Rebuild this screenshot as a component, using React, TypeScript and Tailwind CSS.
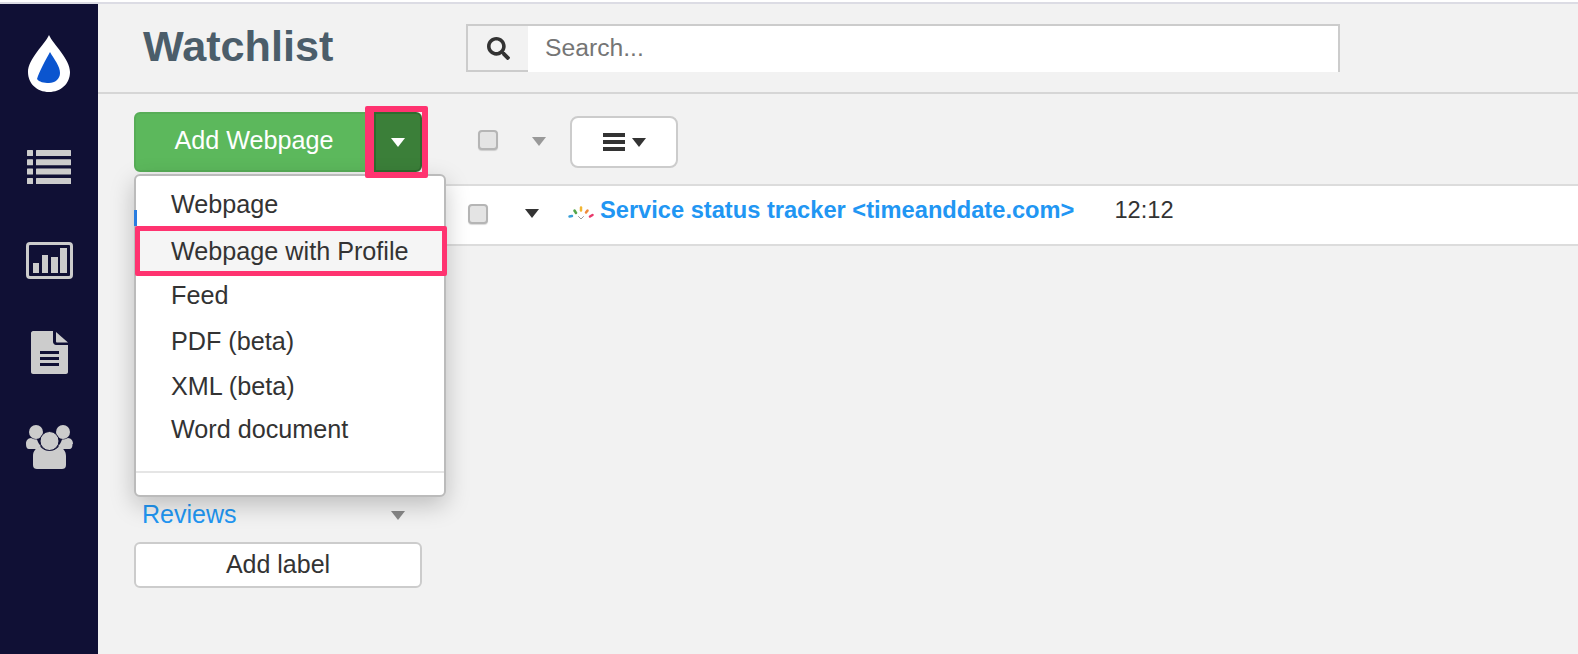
import { FaSearch } from 'react-icons/fa';

const FONT = "font-['Liberation_Sans',Arial,sans-serif]";

function Caret({ className }: { className: string }) {
  return (
    <svg viewBox="0 0 14 9" className={`h-[9px] w-[14px] ${className}`} aria-hidden="true">
      <path d="M0 0h14L7 9z" fill="currentColor" />
    </svg>
  );
}

function Checkbox() {
  return (
    <span className="block h-5 w-5 rounded-[4px] border-2 border-[#b5b5b5] bg-[#e4e4e4] shadow-[0_1px_1px_rgba(0,0,0,0.15)]" />
  );
}

function Logo() {
  return (
    <svg viewBox="0 0 42 57" className="h-[57px] w-[42px]" aria-hidden="true">
      <path d="M21 0C25 9 42 24 42 37C42 48.5 33 57 21 57C9 57 0 48.5 0 37C0 24 17 9 21 0Z" fill="#ffffff" />
      <path d="M22 17C26 24 32 31 32 38C32 44 27 48 21 48C16 48 11 47 9 44C11 37 18 24 22 17Z" fill="#0b55cf" />
    </svg>
  );
}

function ListIcon() {
  return (
    <svg viewBox="0 0 44 34" className="h-[34px] w-[44px]" fill="#cccccc" aria-hidden="true">
      <rect x="0" y="0" width="6" height="6" rx="0.5" />
      <rect x="9" y="0" width="35" height="6" rx="0.5" />
      <rect x="0" y="9.3" width="6" height="6" rx="0.5" />
      <rect x="9" y="9.3" width="35" height="6" rx="0.5" />
      <rect x="0" y="18.6" width="6" height="6" rx="0.5" />
      <rect x="9" y="18.6" width="35" height="6" rx="0.5" />
      <rect x="0" y="28" width="6" height="6" rx="0.5" />
      <rect x="9" y="28" width="35" height="6" rx="0.5" />
    </svg>
  );
}

function ChartIcon() {
  return (
    <svg viewBox="0 0 47 37" className="h-[37px] w-[47px]" aria-hidden="true">
      <rect x="1.5" y="1.5" width="44" height="34" rx="2.5" fill="none" stroke="#cccccc" strokeWidth="3" />
      <g fill="#cccccc">
        <rect x="7" y="21" width="6" height="10" />
        <rect x="16" y="13" width="6" height="18" />
        <rect x="25" y="15" width="7" height="16" />
        <rect x="34" y="6" width="7" height="25" />
      </g>
    </svg>
  );
}

function FileIcon() {
  return (
    <svg viewBox="0 0 37 43" className="h-[43px] w-[37px]" aria-hidden="true">
      <path d="M2 0H22V11C22 12.5 23.5 14 25 14H37V41C37 42 36 43 35 43H2C1 43 0 42 0 41V2C0 1 1 0 2 0Z" fill="#cccccc" />
      <path d="M25 1L37 11.500H26C25.500 11.500 25 11 25 10.500Z" fill="#cccccc" />
      <g fill="#101035">
        <rect x="9" y="20" width="19" height="3" />
        <rect x="9" y="26" width="19" height="3" />
        <rect x="9" y="32" width="19" height="3" />
      </g>
    </svg>
  );
}

function UsersIcon() {
  return (
    <svg viewBox="0 0 47 44" className="h-[44px] w-[47px]" aria-hidden="true">
      <g fill="#cccccc">
        <circle cx="10" cy="7" r="7" />
        <circle cx="37" cy="7" r="7" />
        <path d="M0 19c0-4 2-5.500 5-6 2 1 4 1.500 6 1.500 1 3 2 5 4 6.500-1.500 1-2.500 2-3.500 3H3c-2 0-3-1.500-3-5z" />
        <path d="M47 19c0-4-2-5.500-5-6-2 1-4 1.500-6 1.500-1 3-2 5-4 6.500 1.500 1 2.500 2 3.500 3h8c2 0 3-1.500 3-5z" />
      </g>
      <circle cx="23.500" cy="16" r="9.500" fill="#cccccc" stroke="#101035" strokeWidth="1" />
      <path d="M7 31c0-5 3-8 7-9.500 3 3 6 4.500 9.500 4.500s6.500-1.500 9.500-4.500c4 1.500 7 4.500 7 9.500v9c0 3-2 4-4 4H11c-2 0-4-1-4-4z" fill="#cccccc" />
    </svg>
  );
}

function Favicon() {
  return (
    <svg viewBox="0 0 26 14" className="h-[14px] w-[26px]" strokeWidth="2.5" strokeLinecap="round" aria-hidden="true">
      <path d="M1.500 10.500l2.500-0.500" stroke="#3aa0d8" />
      <path d="M6.500 4.500l1.500 2.500" stroke="#55a64a" />
      <path d="M13 1.500v3" stroke="#f2b632" />
      <path d="M19.500 4.500l-1.500 2" stroke="#ef8a3c" />
      <path d="M24.500 9l-2.500 1.500" stroke="#e8396b" />
      <path d="M10.500 10.500l2.500 2.500 2.500-2.500" stroke="#999999" strokeWidth="1" fill="none" />
    </svg>
  );
}

function MenuItem({ label, className }: { label: string; className: string }) {
  return <div className={`pl-[35px] text-[25.200px] leading-[30px] text-[#333333] ${className}`}>{label}</div>;
}

export default function App() {
  return (
    <div className={`${FONT} h-[654px] w-[1578px] overflow-hidden bg-white`}>
      <div className="mt-[2px] h-[2px] bg-[#dcdce4]" />
      <div className="flex h-[650px]">
        <nav className="flex w-[98px] shrink-0 flex-col items-center bg-[#101035]">
          <div className="mt-[31px]"><Logo /></div>
          <div className="mt-[58px]"><ListIcon /></div>
          <div className="mt-[58px]"><ChartIcon /></div>
          <div className="mt-[52px]"><FileIcon /></div>
          <div className="mt-[51px]"><UsersIcon /></div>
        </nav>

        <main className="relative flex min-w-0 flex-1 flex-col bg-[#f2f2f2]">
          <header className="flex h-[90px] items-start border-b-2 border-[#d6d6d6]">
            <h1 className="ml-[45px] mt-[14px] w-[323px] text-[43.200px] font-bold leading-[56px] text-[#4b5d6a]">Watchlist</h1>
            <div className="mt-[20px] flex h-[48px] w-[874px] border-t-2 border-r-2 border-[#cccccc]">
              <div className="flex w-[62px] items-center justify-center border-b-2 border-l-2 border-[#cccccc]">
                <FaSearch className="h-[23px] w-[23px]" color="#333333" />
              </div>
              <div className="flex-1 bg-white pl-[17px] text-[24.700px] leading-[44px] text-[#757575]">Search...</div>
            </div>
          </header>

          <div className="flex flex-1">
            <aside className="ml-[36px] w-[288px] shrink-0 pt-[18px]">
              <div className="flex h-[60px]">
                <button type="button" className="flex w-[240px] items-center justify-center rounded-l-[6px] border-2 border-[#57ad57] bg-[#5cb85c] pb-[3px] text-[25.200px] text-white">
                  Add Webpage
                </button>
                <button type="button" className="flex w-[48px] items-center justify-center rounded-r-[6px] border-2 border-[#2f6b2e] bg-[#3b7f39] text-white">
                  <Caret className="text-white" />
                </button>
              </div>
              <div className="h-[328px] pt-[38px]">
                <div className="relative z-10 h-[16px] w-[3px] bg-[#2a7de0]" />
              </div>
              <div className="flex h-[30px] items-center justify-between pl-[8px] pr-[17px]">
                <a className="text-[25px] text-[#2196f3]">Reviews</a>
                <Caret className="text-[#888888]" />
              </div>
              <button type="button" className="mt-[12px] h-[46px] w-full rounded-[6px] border-2 border-[#cccccc] bg-white text-[25px] text-[#333333]">
                Add label
              </button>
            </aside>

            <section className="min-w-0 flex-1">
              <div className="flex h-[90px] items-start pt-[22px]">
                <div className="ml-[56px] mt-[14px]"><Checkbox /></div>
                <Caret className="ml-[34px] mt-[21px] text-[#999999]" />
                <button type="button" className="ml-[24px] flex h-[52px] w-[108px] items-center justify-center gap-[7px] rounded-[8px] border-2 border-[#cccccc] bg-white">
                  <span className="flex w-[22px] flex-col gap-[3px]">
                    <span className="h-[4px] bg-[#333333]" />
                    <span className="h-[4px] bg-[#333333]" />
                    <span className="h-[4px] bg-[#333333]" />
                  </span>
                  <Caret className="text-[#333333]" />
                </button>
              </div>
              <div className="flex h-[62px] items-start border-y-2 border-[#dcdcdc] bg-white pl-[46px]">
                <div className="mt-[18px]"><Checkbox /></div>
                <Caret className="ml-[37px] mt-[23px] text-[#333333]" />
                <div className="ml-[29px] mt-[20px]"><Favicon /></div>
                <a className="ml-[6px] mt-[7px] text-[23.650px] font-bold leading-[34px] text-[#2196f3]">
                  Service status tracker &lt;timeanddate.com&gt;
                </a>
                <span className="ml-[40px] mt-[7px] text-[23.650px] leading-[34px] text-[#333333]">12:12</span>
              </div>
            </section>
          </div>

          {/* dropdown menu and its screenshot annotations sit over the columns */}
          <div className="absolute left-[36px] top-[170px] h-[323px] w-[312px] rounded-[6px] border-2 border-[#bbbbbb] bg-white pt-[13px] shadow-[0_8px_24px_rgba(0,0,0,0.22)]">
            <MenuItem label="Webpage" className="h-[47px]" />
            <MenuItem label="Webpage with Profile" className="-mt-[5px] mb-[9px] h-[40px] bg-[#f5f5f5] pt-[5px]" />
            <MenuItem label="Feed" className="h-[46px]" />
            <MenuItem label="PDF (beta)" className="h-[45px]" />
            <MenuItem label="XML (beta)" className="h-[43px]" />
            <MenuItem label="Word document" className="h-[43px]" />
            <div className="mt-[14px] h-[2px] bg-[#e5e5e5]" />
          </div>
          <div className="absolute left-[37px] top-[222px] h-[50px] w-[312px] rounded-[2px] border-[5px] border-[#ff3370]" />
          <div className="absolute left-[267px] top-[102px] h-[72px] w-[63px] rounded-[2px] border-[6px] border-l-[9px] border-[#ff3370]" />
        </main>
      </div>
    </div>
  );
}
